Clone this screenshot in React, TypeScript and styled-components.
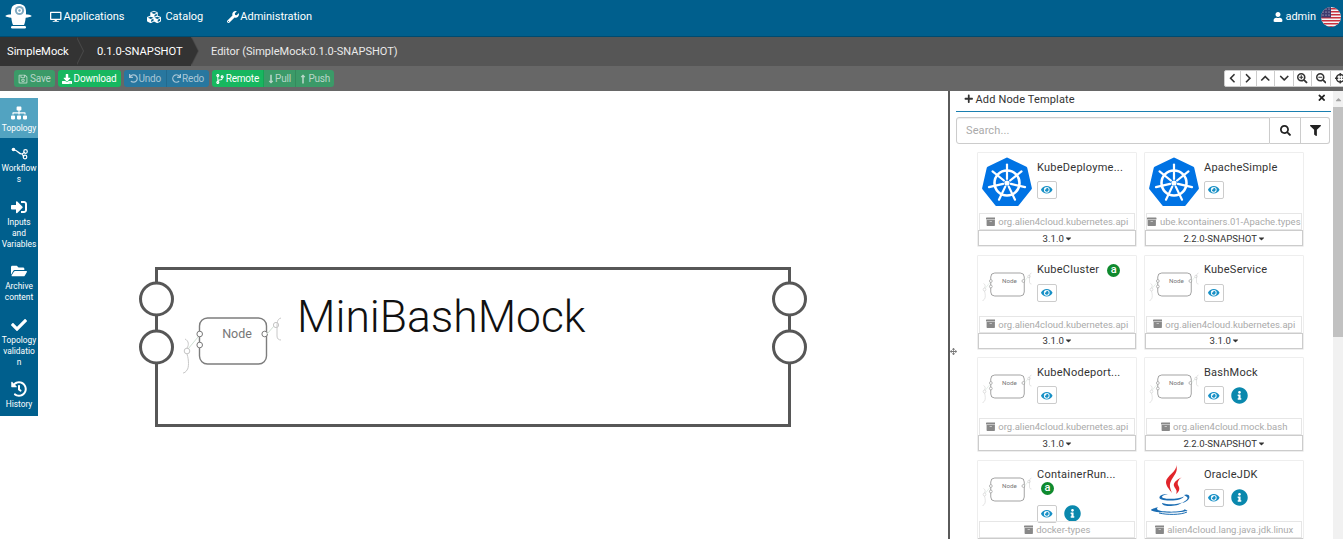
import styled, { createGlobalStyle } from "styled-components";
import {
  FaDesktop, FaCubes, FaWrench, FaUser, FaRegSave, FaDownload, FaUndo, FaRedo, FaCodeBranch,
  FaLongArrowAltDown, FaLongArrowAltUp, FaSitemap, FaSignInAlt, FaFolderOpen, FaCheck, FaHistory,
  FaPlus, FaTimes, FaSearch, FaFilter, FaArchive, FaCaretDown, FaEye, FaInfoCircle, FaChevronLeft,
  FaChevronRight, FaChevronUp, FaChevronDown, FaSearchPlus, FaSearchMinus, FaCrosshairs, FaCaretUp, FaArrowsAlt,
} from "react-icons/fa";

const GlobalStyle = createGlobalStyle`
  html, body {
    margin: 0;
    height: 100%;
    overflow: hidden;
    background: #fff;
    font-family: Roboto, "Liberation Sans", sans-serif;
    font-size: 11px;
  }
  * { box-sizing: border-box; }
`;

const Page = styled.div`
  display: flex;
  flex-direction: column;
  height: 539px;
  overflow: hidden;
`;

const NavBar = styled.div`
  display: flex;
  align-items: center;
  height: 37px;
  flex: none;
  background: #005f8d;
  border-bottom: 1px solid #004b70;
  color: #fff;
  padding: 0 0 3px 5px;
`;

const NavItem = styled.div<{ $gap: number; $left: number; $icon: number }>`
  display: flex;
  align-items: center;
  gap: ${(p) => p.$gap}px;
  margin-left: ${(p) => p.$left}px;
  font-size: 11px;
  svg { font-size: ${(p) => p.$icon}px; }
`;

const UserArea = styled.div`
  display: flex;
  align-items: center;
  margin-left: auto;
  margin-right: 2px;
  gap: 5px;
  font-size: 11px;
  svg:first-child { font-size: 10px; margin-right: -3px; }
`;

const Crumbs = styled.div`
  display: flex;
  align-items: center;
  height: 29px;
  flex: none;
  background: #565656;
  color: #fff;
  font-size: 11.2px;
`;

const Crumb = styled.div<{ $width: number }>`
  position: relative;
  width: ${(p) => p.$width}px;
  height: 29px;
  line-height: 30px;
  background: #333;
  padding-left: ${(p) => (p.$width > 90 ? 21 : 7)}px;
  &::after {
    content: "";
    position: absolute;
    z-index: 2;
    top: 0;
    right: -7px;
    border-left: 7px solid #333;
    border-top: 14.5px solid transparent;
    border-bottom: 14.5px solid transparent;
    filter: drop-shadow(1px 0 0 #4a4a4a);
  }
`;

const CrumbText = styled.div`
  margin-left: 20px;
  color: #eaeaea;
  font-size: 11px;
`;

const ToolBar = styled.div`
  display: flex;
  align-items: center;
  height: 25px;
  flex: none;
  background: #676767;
  padding-left: 14px;
  overflow: hidden;
`;

const BtnGroup = styled.div`
  display: flex;
  margin-right: 3px;
  border-radius: 3px;
  overflow: hidden;
`;

const ToolBtn = styled.div<{ $tone: "green" | "dim" | "blue" }>`
  display: flex;
  align-items: center;
  height: 17px;
  gap: 2px;
  padding: 0 4px;
  font-size: 10px;
  letter-spacing: -0.2px;
  color: ${(p) => (p.$tone === "green" ? "#fff" : "#b9d6c8")};
  background: ${(p) => (p.$tone === "green" ? "#17b75f" : p.$tone === "dim" ? "#3b9a68" : "#28779f")};
  border-right: 1px solid rgba(0, 0, 0, 0.1);
  ${(p) => p.$tone === "blue" && "color: #a9c6d6; padding: 0 5px; gap: 1px;"}
  svg { font-size: ${(p) => (p.$tone === "blue" ? 9 : 10)}px; }
  &:last-child { border-right: 0; }
`;

// react-icons draws narrow glyphs in a square box: take the empty sides back
const PullIcon = styled(FaLongArrowAltDown)`
  margin: 0 -2.5px;
`;

const PushIcon = styled(FaLongArrowAltUp)`
  margin: 0 -2px 0 -1.5px;
`;

const BranchIcon = styled(FaCodeBranch)`
  margin: 0 -1.2px;
`;

const MapBtns = styled.div`
  display: flex;
  margin-left: auto;
  margin-right: -7px;
  background: #fff;
  border: 1px solid #ccc;
  border-radius: 2px 0 0 2px;
`;

const MapBtn = styled.div<{ $width: number }>`
  display: flex;
  align-items: center;
  justify-content: center;
  width: ${(p) => p.$width}px;
  height: 15px;
  border-right: 1px solid #ccc;
  color: #333;
  font-size: 10.5px;
  &:last-child { border-right: 0; }
`;

const Main = styled.div`
  display: flex;
  flex: 1;
  min-height: 0;
`;

const SideMenu = styled.div`
  flex: none;
  width: 38px;
  height: 318px;
  margin-top: 7px;
  background: #005f8d;
`;

const SideItem = styled.div<{ $active?: boolean }>`
  display: flex;
  flex-direction: column;
  align-items: center;
  padding: 7px 0 ${(p) => (p.$active ? 4 : 6.5)}px;
  background: ${(p) => (p.$active ? "#52a3c1" : "transparent")};
  color: #fff;
  font-size: 8.4px;
  line-height: 11px;
  text-align: center;
  white-space: pre-line;
`;

const SideIcon = styled.div`
  display: flex;
  align-items: center;
  justify-content: center;
  height: 16px;
  margin-bottom: 2px;
  font-size: 16px;
`;

const Canvas = styled.div`
  position: relative;
  flex: 1;
`;

const Diagram = styled.svg`
  position: absolute;
  left: 92px;
  top: 164px;
`;

const Panel = styled.div`
  position: relative;
  display: flex;
  flex: none;
  width: 395px;
  border-left: 2px solid #5a5a5a;
`;

const SplitHandle = styled.div`
  position: absolute;
  left: 0;
  top: 257px;
  color: #777;
  font-size: 7px;
`;

const PanelBody = styled.div`
  flex: 1;
  min-width: 0;
  padding: 0 2px 0 6px;
`;

const PanelHead = styled.div`
  display: flex;
  align-items: center;
  height: 21px;
  padding: 0 5px 4px 8px;
  border-bottom: 1px solid #1a7fb0;
  color: #333;
  font-size: 11px;
  letter-spacing: 0.15px;
  gap: 2px;
  svg { font-size: 9.5px; }
  svg:last-child { margin-left: auto; margin-top: -2px; color: #222; }
`;

const SearchRow = styled.div`
  display: flex;
  height: 27px;
  margin-top: 5px;
  width: 374px;
`;

const SearchInput = styled.div`
  flex: 1;
  padding-left: 9px;
  line-height: 25px;
  color: #aaa;
  font-size: 11px;
  letter-spacing: 0.1px;
  border: 1px solid #ccc;
  border-radius: 3px 0 0 3px;
  box-shadow: inset 0 1px 1px rgba(0, 0, 0, 0.07);
`;

const SearchBtn = styled.div<{ $width: number }>`
  display: flex;
  align-items: center;
  justify-content: center;
  width: ${(p) => p.$width}px;
  border: 1px solid #ccc;
  border-left: 0;
  color: #222;
  font-size: 11px;
  &:last-child { border-radius: 0 3px 3px 0; }
`;

const CardGrid = styled.div`
  display: grid;
  grid-template-columns: 160px 160px;
  grid-auto-rows: 95px;
  column-gap: 7px;
  row-gap: 7.67px;
  margin: 8px 0 0 21px;
`;

const Card = styled.div`
  display: flex;
  flex-direction: column;
  border: 1px solid #eee;
  border-radius: 1px;
`;

const CardTop = styled.div`
  display: flex;
  height: 60px;
  flex: none;
  padding: 4px 0 0 4px;
`;

const Thumb = styled.div`
  flex: none;
  width: 50px;
  height: 50px;
  margin-right: 5px;
`;

const CardInfo = styled.div`
  flex: 1;
  min-width: 0;
`;

const TitleRow = styled.div`
  display: flex;
  flex-wrap: wrap;
  align-items: center;
  column-gap: 8px;
  padding-top: 3px;
  width: 96px;
  min-height: 18px;
  line-height: 14px;
  color: #333;
  font-size: 11px;
  letter-spacing: 0.25px;
`;

const Badge = styled.span<{ $wrapped?: boolean }>`
  display: inline-flex;
  align-items: center;
  justify-content: center;
  width: 13px;
  height: 13px;
  margin-left: ${(p) => (p.$wrapped ? 4 : 0)}px;
  border-radius: 50%;
  background: #0f8a2e;
  color: #fff;
  font-size: 11px;
  font-weight: 500;
  line-height: 12px;
`;

const Actions = styled.div<{ $wrapped?: boolean }>`
  display: flex;
  align-items: center;
  gap: 7px;
  margin-top: ${(p) => (p.$wrapped ? 10 : 6)}px;
`;

const EyeBtn = styled.div`
  display: flex;
  align-items: center;
  justify-content: center;
  width: 20px;
  height: 18px;
  background: #fff;
  border: 1px solid #ccc;
  border-radius: 2px;
  color: #1790c6;
  font-size: 11.5px;
`;

const InfoDot = styled.div`
  display: flex;
  color: #0a88ad;
  font-size: 17px;
  background: transparent;
`;

const ArchiveRow = styled.div`
  display: flex;
  align-items: center;
  justify-content: center;
  gap: 3px;
  height: 17px;
  flex: none;
  border: 1px solid #e6e6e6;
  margin: 0 1px;
  color: #aaa;
  font-size: 9.5px;
  white-space: nowrap;
  overflow: hidden;
  svg { flex: none; font-size: 9.5px; color: #888; }
`;

const VersionRow = styled.div`
  display: flex;
  align-items: center;
  justify-content: center;
  gap: 2px;
  height: 16px;
  flex: none;
  border: 1px solid #ccc;
  color: #333;
  font-size: 9.6px;
  svg { font-size: 9px; margin: 0 -1.7px; }
`;

const ScrollTrack = styled.div`
  display: flex;
  flex-direction: column;
  flex: none;
  width: 10px;
  background: #f1f1f1;
`;

const ScrollArrow = styled.div`
  display: flex;
  justify-content: center;
  align-items: center;
  height: 16px;
  color: #a3a3a3;
  font-size: 9px;
`;

const ScrollThumb = styled.div`
  height: 230px;
  background: #c1c1c1;
`;

const Flag = () => (
  <svg width="20" height="20" viewBox="0 0 20 20">
    <defs>
      <clipPath id="flagClip"><circle cx="10" cy="10" r="10" /></clipPath>
    </defs>
    <g clipPath="url(#flagClip)">
      <rect width="20" height="20" fill="#f4f4f4" />
      {[1, 4, 7, 10, 13, 16, 19].map((y) => (
        <rect key={y} x="0" y={y} width="20" height="1.5" fill="#c8313e" />
      ))}
      <rect width="10" height="10.5" fill="#3c3b6e" />
      {[2, 5, 8].map((y) => [2, 5, 8].map((x) => <circle key={`${x}-${y}`} cx={x} cy={y} r="0.6" fill="#dfe0ee" />))}
    </g>
  </svg>
);

const Logo = () => (
  <svg width="27" height="26" viewBox="0 0 27 26">
    <ellipse cx="13.5" cy="12" rx="13" ry="2" fill="#fff" />
    <path d="M6 8 C6 2 9 0 13.5 0 C18 0 21 2 21 8 C21 14 20 19 19 21 L8 21 C7 19 6 14 6 8 Z" fill="#fff" />
    <circle cx="14.5" cy="6.5" r="4.6" fill="#7fa9c1" />
    <circle cx="14.5" cy="6.5" r="2.6" fill="#fff" />
    <circle cx="14.5" cy="6.5" r="1.2" fill="#7fa9c1" />
    <rect x="6" y="22" width="15" height="2.4" rx="1.2" fill="#fff" />
  </svg>
);

const WorkflowIcon = () => (
  <svg width="17" height="13" viewBox="0 0 17 13" fill="none" stroke="#fff">
    <path d="M3 3 C7 3 7 7 11 7 L14 5 M11 7 L13 10" strokeWidth="1.2" />
    <circle cx="2.5" cy="2.5" r="1.8" fill="#fff" stroke="none" />
    <circle cx="14.5" cy="4.5" r="1.8" fill="none" strokeWidth="1.2" />
    <circle cx="14" cy="10" r="1.8" fill="none" strokeWidth="1.2" />
  </svg>
);

// the generic "Node" image, in a 100 x 100 box
const NodeGlyph = () => (
  <g fill="none">
    <path d="M3 47 C7 49 7 53 5 56 M5 62 C7 68 7 76 5 78 C4 80 2 81 1 81" stroke="#c8c8c8" strokeWidth="1" />
    <path d="M6 57 L16 45" stroke="#cfe0d4" strokeWidth="1" />
    <circle cx="5" cy="59" r="2.8" fill="#fff" stroke="#c4c4c4" />
    <rect x="17.5" y="26" width="67" height="46" rx="8" fill="#fff" stroke="#7d7d7d" strokeWidth="1.4" />
    <circle cx="17.7" cy="42" r="2.8" fill="#fff" stroke="#7a7a7a" />
    <circle cx="17.7" cy="53" r="2.8" fill="#fff" stroke="#7a7a7a" />
    <circle cx="82.7" cy="42" r="2.8" fill="#fff" stroke="#7a7a7a" />
    <path d="M85 42 L92 34" stroke="#cfe0d4" strokeWidth="1" />
    <circle cx="94" cy="33" r="2.6" fill="#fff" stroke="#c4c4c4" />
    <path d="M99 26 C95 27 95 31 95 36 L95 44 C95 47 97 48 99 48" stroke="#c8c8c8" strokeWidth="1" />
    <text x="55" y="46" textAnchor="middle" fontSize="12.5" fill="#777" stroke="none" fontFamily="Roboto, sans-serif">Node</text>
  </g>
);

const NodeThumb = () => (
  <svg width="50" height="50" viewBox="0 0 100 100"><NodeGlyph /></svg>
);

const polar = (r: number, k: number, cx = 25, cy = 26) => {
  const a = -Math.PI / 2 + (k * 2 * Math.PI) / 7;
  return [cx + r * Math.cos(a), cy + r * Math.sin(a)];
};
const seven = [0, 1, 2, 3, 4, 5, 6];

const KubeThumb = () => (
  <svg width="50" height="50" viewBox="0 0 50 50">
    <polygon
      points={seven.map((k) => polar(24, k).join(",")).join(" ")}
      fill="#0073e4"
      stroke="#0073e4"
      strokeWidth="3"
      strokeLinejoin="round"
    />
    <circle cx="25" cy="26" r="12.5" fill="none" stroke="#fff" strokeWidth="2.6" />
    <circle cx="25" cy="26" r="2.6" fill="#fff" />
    {seven.map((k) => {
      const [x1, y1] = polar(4, k);
      const [x2, y2] = polar(18.5, k);
      return <line key={k} x1={x1} y1={y1} x2={x2} y2={y2} stroke="#fff" strokeWidth="2.2" strokeLinecap="round" />;
    })}
  </svg>
);

const JavaThumb = () => (
  <svg width="50" height="50" viewBox="0 0 50 50" fill="none">
    <path d="M27 0 C29 6 17 11 17 17 C17 21 20 24 23 28 C21 23 20 20 22 16 C24 11 30 7 27 0 Z" fill="#e1252b" />
    <path d="M33 12 C27 15 24 18 25 21 C26 24 29 25 27 29 C31 26 31 23 29 20 C28 17 30 14 33 12 Z" fill="#e1252b" />
    <path d="M11 31 C14 29 17 29 19 29 C13 30 12 32 14 33 C19 34.5 30 34 35 31.5 C34 33 31 35 24 35.5 C17 36 8 35 11 31 Z" fill="#1b6db3" />
    <path d="M13 38 C19 40 29 39.5 33 37.5 C31 40 25 41 20 41 C16 41 13 40 13 38 Z" fill="#1b6db3" />
    <path d="M35 30 C40 28 42 32 39 35 C37 37 34 38 33 38 C36 36 40 34 38 32 C37 31 36 31 35 30 Z" fill="#1b6db3" />
    <path d="M9 42 C6 43 2 44 2 45 C2 48 34 49 39 45 C38 46 36 44 35 44 C38 46 26 47 18 46.5 C10 46 6 45 9 42 Z" fill="#1b6db3" />
    <path d="M10 48 C18 50 32 50 38 47" stroke="#1b6db3" strokeWidth="1" />
  </svg>
);

type CardData = {
  name: string;
  archive: string;
  version?: string; // the last row is cut by the page before its version shows
  thumb: "kube" | "node" | "java";
  badge?: boolean;
  info?: boolean;
  wrapped?: boolean;
};

const cards: CardData[] = [
  { name: "KubeDeployme...", archive: "org.alien4cloud.kubernetes.api", version: "3.1.0", thumb: "kube" },
  { name: "ApacheSimple", archive: "ube.kcontainers.01-Apache.types", version: "2.2.0-SNAPSHOT", thumb: "kube" },
  { name: "KubeCluster", archive: "org.alien4cloud.kubernetes.api", version: "3.1.0", thumb: "node", badge: true },
  { name: "KubeService", archive: "org.alien4cloud.kubernetes.api", version: "3.1.0", thumb: "node" },
  { name: "KubeNodeport...", archive: "org.alien4cloud.kubernetes.api", version: "3.1.0", thumb: "node" },
  { name: "BashMock", archive: "org.alien4cloud.mock.bash", version: "2.2.0-SNAPSHOT", thumb: "node", info: true },
  { name: "ContainerRun...", archive: "docker-types", thumb: "node", badge: true, info: true, wrapped: true },
  { name: "OracleJDK", archive: "alien4cloud.lang.java.jdk.linux", thumb: "java", info: true },
];

const sideItems = [
  { label: "Topology", icon: <FaSitemap />, active: true },
  { label: "Workflow\ns", icon: <WorkflowIcon /> },
  { label: "Inputs\nand\nVariables", icon: <FaSignInAlt /> },
  { label: "Archive\ncontent", icon: <FaFolderOpen /> },
  { label: "Topology\nvalidatio\nn", icon: <FaCheck /> },
  { label: "History", icon: <FaHistory /> },
];

const NodeCard = ({ card }: { card: CardData }) => (
  <Card>
    <CardTop>
      <Thumb>
        {card.thumb === "kube" && <KubeThumb />}
        {card.thumb === "node" && <NodeThumb />}
        {card.thumb === "java" && <JavaThumb />}
      </Thumb>
      <CardInfo>
        <TitleRow>
          {card.name}
          {card.badge && <Badge $wrapped={card.wrapped}>a</Badge>}
        </TitleRow>
        <Actions $wrapped={card.wrapped}>
          <EyeBtn><FaEye /></EyeBtn>
          {card.info && <InfoDot><FaInfoCircle /></InfoDot>}
        </Actions>
      </CardInfo>
    </CardTop>
    <ArchiveRow><FaArchive />{card.archive}</ArchiveRow>
    <VersionRow>{card.version && <>{card.version}<FaCaretDown /></>}</VersionRow>
  </Card>
);

export default function App() {
  return (
    <Page>
      <GlobalStyle />
      <NavBar>
        <Logo />
        <NavItem $gap={2} $left={18} $icon={11.5}><FaDesktop />Applications</NavItem>
        <NavItem $gap={4} $left={23} $icon={14}><FaCubes />Catalog</NavItem>
        <NavItem $gap={1} $left={24} $icon={12}><FaWrench />Administration</NavItem>
        <UserArea><FaUser />admin<Flag /></UserArea>
      </NavBar>
      <Crumbs>
        <Crumb $width={76}>SimpleMock</Crumb>
        <Crumb $width={115}>0.1.0-SNAPSHOT</Crumb>
        <CrumbText>Editor (SimpleMock:0.1.0-SNAPSHOT)</CrumbText>
      </Crumbs>
      <ToolBar>
        <BtnGroup><ToolBtn $tone="dim"><FaRegSave />Save</ToolBtn></BtnGroup>
        <BtnGroup><ToolBtn $tone="green"><FaDownload />Download</ToolBtn></BtnGroup>
        <BtnGroup>
          <ToolBtn $tone="blue"><FaUndo />Undo</ToolBtn>
          <ToolBtn $tone="blue"><FaRedo />Redo</ToolBtn>
        </BtnGroup>
        <BtnGroup>
          <ToolBtn $tone="green"><BranchIcon />Remote</ToolBtn>
          <ToolBtn $tone="dim"><PullIcon />Pull</ToolBtn>
          <ToolBtn $tone="dim"><PushIcon />Push</ToolBtn>
        </BtnGroup>
        <MapBtns>
          <MapBtn $width={16}><FaChevronLeft /></MapBtn>
          <MapBtn $width={16}><FaChevronRight /></MapBtn>
          <MapBtn $width={18.5}><FaChevronUp /></MapBtn>
          <MapBtn $width={18.5}><FaChevronDown /></MapBtn>
          <MapBtn $width={18.5}><FaSearchPlus /></MapBtn>
          <MapBtn $width={19}><FaSearchMinus /></MapBtn>
          <MapBtn $width={18}><FaCrosshairs /></MapBtn>
        </MapBtns>
      </ToolBar>
      <Main>
        <SideMenu>
          {sideItems.map((item) => (
            <SideItem key={item.label} $active={item.active}>
              <SideIcon>{item.icon}</SideIcon>
              {item.label}
            </SideItem>
          ))}
        </SideMenu>
        <Canvas>
          <Diagram width="690" height="190" viewBox="0 0 690 190">
            <rect x="26.5" y="13.5" width="633" height="157" fill="#fff" stroke="#575757" strokeWidth="3" />
            {[44, 92].map((cy) => (
              <g key={cy} fill="#fff" stroke="#575757" strokeWidth="3">
                <circle cx="26.5" cy={cy} r="16" />
                <circle cx="659.5" cy={cy} r="16" />
              </g>
            ))}
            <svg x="52" y="37" width="100" height="100" viewBox="0 0 100 100"><NodeGlyph /></svg>
            <text x="167" y="77" fontFamily="Roboto, sans-serif" fontWeight="300" fontSize="44.4" fill="#111">MiniBashMock</text>
          </Diagram>
        </Canvas>
        <Panel>
          <SplitHandle><FaArrowsAlt /></SplitHandle>
          <PanelBody>
            <PanelHead><FaPlus />Add Node Template<FaTimes /></PanelHead>
            <SearchRow>
              <SearchInput>Search...</SearchInput>
              <SearchBtn $width={31}><FaSearch /></SearchBtn>
              <SearchBtn $width={29}><FaFilter /></SearchBtn>
            </SearchRow>
            <CardGrid>
              {cards.map((card) => <NodeCard key={card.name} card={card} />)}
            </CardGrid>
          </PanelBody>
          <ScrollTrack>
            <ScrollArrow><FaCaretUp /></ScrollArrow>
            <ScrollThumb />
          </ScrollTrack>
        </Panel>
      </Main>
    </Page>
  );
}
